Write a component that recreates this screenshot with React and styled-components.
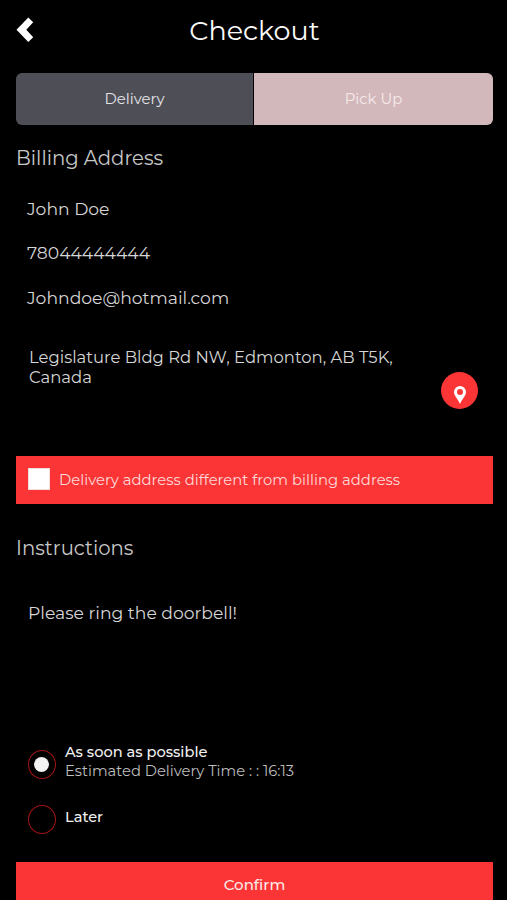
import styled, { createGlobalStyle } from "styled-components";

const GlobalStyle = createGlobalStyle`
  * {
    box-sizing: border-box;
  }
  body {
    margin: 0;
    background: #000;
    overflow: hidden;
    font-family: Montserrat, Inter, sans-serif;
  }
`;

const Page = styled.div`
  height: 900px;
  padding: 0 14px 0 16px;
  background: #000;
  color: #d6d6d6;
  display: flex;
  flex-direction: column;
  overflow: hidden;
`;

const Header = styled.header`
  height: 73px;
  flex-shrink: 0;
  display: grid;
  grid-template-columns: 18px 1fr 18px;
  align-items: start;
`;

const Back = styled.button`
  margin: 17px 0 0;
  padding: 0;
  border: none;
  background: none;
  line-height: 0;
  cursor: pointer;
`;

const Title = styled.h1`
  margin: 11px 0 0;
  font-size: 27px;
  font-weight: 400;
  line-height: 40px;
  text-align: center;
  color: #fafafa;
`;

const Tabs = styled.div`
  height: 51.5px;
  flex-shrink: 0;
  display: grid;
  grid-template-columns: 237px 1fr;
  gap: 1px;
  border-radius: 6px;
  overflow: hidden;
`;

const Tab = styled.button`
  border: none;
  padding: 0;
  background: ${(props) => (props.$active ? "#4e4e57" : "#d3b8bb")};
  color: ${(props) => (props.$active ? "#e4e4e6" : "#f6eaeb")};
  font-family: inherit;
  font-size: 14.9px;
  cursor: pointer;
`;

const Heading = styled.h2`
  margin: ${(props) => props.$top}px 0 0;
  font-size: 19.65px;
  font-weight: 400;
  line-height: 24px;
  color: #c8c8c8;
`;

const Fields = styled.div`
  margin-top: 17px;
  padding-left: 11px;
`;

const Field = styled.div`
  height: 44.5px;
  font-size: 17.2px;
  line-height: 44.5px;
`;

const AddressRow = styled.div`
  height: 109px;
  flex-shrink: 0;
  margin-top: 26.5px;
  padding: 0 15px 0 13px;
  display: flex;
  justify-content: space-between;
`;

const Address = styled.div`
  padding-top: 0.4px;
  font-size: 16.45px;
  line-height: 20px;
  white-space: nowrap;
`;

const PinButton = styled.button`
  width: 37px;
  height: 37px;
  margin-top: 25.5px;
  padding: 9px 0 0;
  border: none;
  border-radius: 50%;
  background: #fb3536;
  display: flex;
  align-items: center;
  justify-content: center;
  cursor: pointer;
`;

const Different = styled.label`
  height: 48.5px;
  flex-shrink: 0;
  padding-left: 12px;
  background: #fb3536;
  color: #fbd9d9;
  display: flex;
  align-items: center;
  gap: 9px;
  font-size: 14.83px;
  white-space: nowrap;
`;

const Box = styled.span`
  width: 22px;
  height: 22px;
  margin-top: -2px;
  background: #fff;
  border: 1px solid #f3dede;
`;

const Note = styled.div`
  height: 141.5px;
  flex-shrink: 0;
  margin-top: 41px;
  padding-left: 12px;
  font-size: 17.2px;
  line-height: 24px;
`;

const Option = styled.label`
  height: 55px;
  flex-shrink: 0;
  padding-left: 12px;
  display: flex;
  gap: 9px;
`;

const Radio = styled.span`
  width: 28px;
  height: 29px;
  margin-top: 7px;
  border: 1px solid #a31214;
  border-radius: 50%;
  display: flex;
  align-items: center;
  justify-content: center;
`;

const Dot = styled.span`
  width: 15px;
  height: 15px;
  margin: 1px 1px 0 0;
  border-radius: 50%;
  background: #f2f2f2;
`;

const OptionText = styled.div`
  padding-top: ${(props) => props.$top}px;
  line-height: 19px;
  white-space: nowrap;
`;

const OptionName = styled.div`
  font-size: 14.6px;
  font-weight: 500;
  color: #f0f0f0;
`;

const Estimate = styled.div`
  font-size: 14.75px;
  color: #bdbdbd;
`;

const Confirm = styled.button`
  height: 44px;
  flex-shrink: 0;
  margin-top: 9.5px;
  padding: 0;
  border: none;
  background: #fb3536;
  color: #fdeaea;
  font-family: inherit;
  font-size: 15px;
  font-weight: 500;
  cursor: pointer;
`;

const App = () => {
  return (
    <>
      <GlobalStyle />
      <Page>
        <Header>
          <Back aria-label="Back">
            <svg width="18" height="26" viewBox="0 0 18 26">
              <path d="M12.3 0.5 L17.2 5.2 L10.3 12.7 L17.2 20.3 L12.3 25 L0.5 12.7 Z" fill="#fff" />
            </svg>
          </Back>
          <Title>Checkout</Title>
        </Header>

        <Tabs>
          <Tab $active>Delivery</Tab>
          <Tab>Pick Up</Tab>
        </Tabs>

        <Heading $top={21}>Billing Address</Heading>
        <Fields>
          <Field>John Doe</Field>
          <Field>78044444444</Field>
          <Field>Johndoe@hotmail.com</Field>
        </Fields>

        <AddressRow>
          <Address>
            Legislature Bldg Rd NW, Edmonton, AB T5K,
            <br />
            Canada
          </Address>
          <PinButton aria-label="Locate">
            <svg width="12" height="18" viewBox="0 0 12 18">
              <path
                d="M6 0 A6 6 0 0 0 0 6 C0 9.6 3.6 12.6 6 18 C8.4 12.6 12 9.6 12 6 A6 6 0 0 0 6 0 Z M6 3 A3 3 0 1 1 6 9 A3 3 0 1 1 6 3 Z"
                fill="#fff"
                fillRule="evenodd"
              />
            </svg>
          </PinButton>
        </AddressRow>

        <Different>
          <Box />
          Delivery address different from billing address
        </Different>

        <Heading $top={32}>Instructions</Heading>
        <Note>Please ring the doorbell!</Note>

        <Option>
          <Radio>
            <Dot />
          </Radio>
          <OptionText $top={0}>
            <OptionName>As soon as possible</OptionName>
            <Estimate>Estimated Delivery Time : : 16:13</Estimate>
          </OptionText>
        </Option>
        <Option>
          <Radio />
          <OptionText $top={10}>
            <OptionName>Later</OptionName>
          </OptionText>
        </Option>

        <Confirm>Confirm</Confirm>
      </Page>
    </>
  );
};

export default App;
